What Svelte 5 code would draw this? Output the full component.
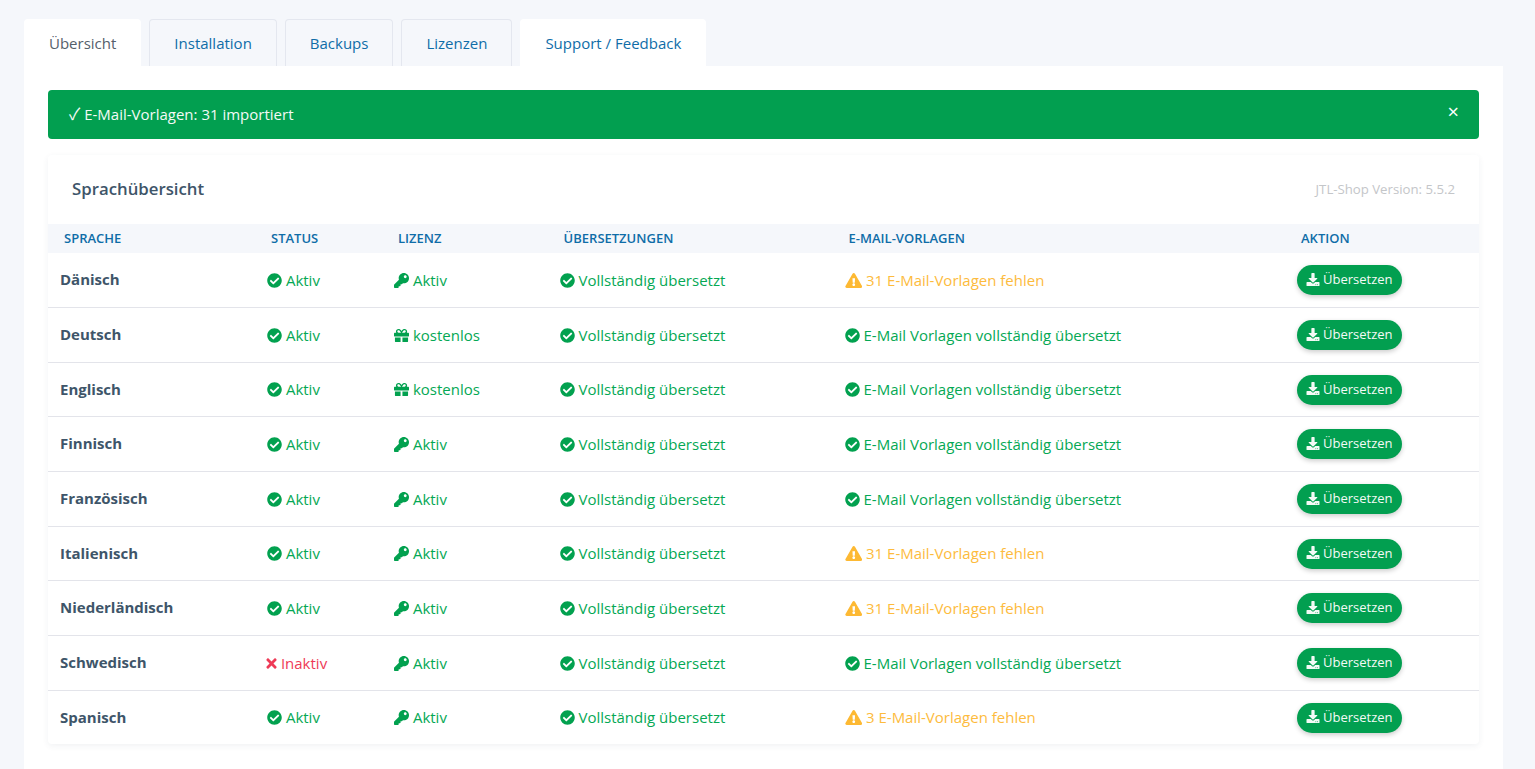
<script>
  const icons = {
    check: { vb: '0 0 512 512', d: 'M504 256c0 136.967-111.033 248-248 248S8 392.967 8 256 119.033 8 256 8s248 111.033 248 248zM227.314 387.314l184-184c6.248-6.248 6.248-16.379 0-22.627l-22.627-22.627c-6.248-6.249-16.379-6.249-22.628 0L216 308.118l-70.059-70.059c-6.248-6.248-16.379-6.248-22.628 0l-22.627 22.627c-6.248 6.248-6.248 16.379 0 22.627l104 104c6.249 6.249 16.379 6.249 22.628.001z' },
    key: { vb: '0 0 512 512', d: 'M512 176.001C512 273.203 433.202 352 336 352c-11.22 0-22.19-1.062-32.827-3.069l-24.012 27.014A23.999 23.999 0 0 1 261.223 384H224v40c0 13.255-10.745 24-24 24h-40v40c0 13.255-10.745 24-24 24H24c-13.255 0-24-10.745-24-24v-78.059c0-6.365 2.529-12.47 7.029-16.971l161.802-161.802C163.108 213.814 160 195.271 160 176 160 78.798 238.797.001 335.999 0 433.488-.001 512 78.511 512 176.001zM336 128c0 26.51 21.49 48 48 48s48-21.49 48-48-21.49-48-48-48-48 21.49-48 48z' },
    gift: { vb: '0 0 512 512', d: 'M32 448c0 17.7 14.3 32 32 32h160V320H32v128zm256 32h160c17.7 0 32-14.3 32-32V320H288v160zm192-320h-42.1c6.2-12.1 10.1-25.5 10.1-40 0-48.5-39.5-88-88-88-41.6 0-68.5 21.3-103 68.3-34.5-47-61.4-68.3-103-68.3-48.5 0-88 39.5-88 88 0 14.5 3.8 27.9 10.1 40H32c-17.7 0-32 14.3-32 32v80c0 8.8 7.2 16 16 16h480c8.8 0 16-7.2 16-16v-80c0-17.7-14.3-32-32-32zm-326.1 0c-22.1 0-40-17.9-40-40s17.9-40 40-40c19.9 0 34.6 3.3 86.1 80h-86.1zm206.1 0h-86.1c51.4-76.5 65.7-80 86.1-80 22.1 0 40 17.9 40 40s-17.9 40-40 40z' },
    warn: { vb: '0 0 576 512', d: 'M569.517 440.013C587.975 472.007 564.806 512 527.94 512H48.054c-36.937 0-59.999-40.055-41.577-71.987L246.423 24.035c18.467-32.009 64.72-31.951 83.154 0l239.94 416.978zM288 354c-25.405 0-46 20.595-46 46s20.595 46 46 46 46-20.595 46-46-20.595-46-46-46zm-43.673-165.346l7.418 136c.347 6.364 5.609 11.346 11.982 11.346h48.546c6.373 0 11.635-4.982 11.982-11.346l7.418-136c.375-6.874-5.098-12.654-11.982-12.654h-63.383c-6.884 0-12.356 5.78-11.981 12.654z' },
    times: { vb: '0 0 352 512', d: 'M242.72 256l100.07-100.07c12.28-12.28 12.28-32.19 0-44.48l-22.24-22.24c-12.28-12.28-32.19-12.28-44.48 0L176 189.28 75.93 89.21c-12.28-12.28-32.19-12.28-44.48 0L9.21 111.45c-12.28 12.28-12.28 32.19 0 44.48L109.28 256 9.21 356.07c-12.28 12.28-12.28 32.19 0 44.48l22.24 22.24c12.28 12.28 32.2 12.28 44.48 0L176 322.72l100.07 100.07c12.28 12.28 32.2 12.28 44.48 0l22.24-22.24c12.28-12.28 12.28-32.19 0-44.48L242.72 256z' },
    download: { vb: '0 0 512 512', d: 'M216 0h80c13.3 0 24 10.7 24 24v168h87.7c17.8 0 26.7 21.5 14.1 34.1L269.7 378.3c-7.5 7.5-19.8 7.5-27.3 0L90.1 226.1c-12.6-12.6-3.7-34.1 14.1-34.1H192V24c0-13.3 10.7-24 24-24zm296 376v112c0 13.3-10.7 24-24 24H24c-13.3 0-24-10.7-24-24V376c0-13.3 10.7-24 24-24h146.7l49 49c20.1 20.1 52.5 20.1 72.6 0l49-49H488c13.3 0 24 10.7 24 24zm-124 88c0-11-9-20-20-20s-20 9-20 20 9 20 20 20 20-9 20-20zm64 0c0-11-9-20-20-20s-20 9-20 20 9 20 20 20 20-9 20-20z' }
  };

  const tabs = [
    { label: 'Übersicht', cls: 'active' },
    { label: 'Installation', cls: '' },
    { label: 'Backups', cls: '' },
    { label: 'Lizenzen', cls: '' },
    { label: 'Support / Feedback', cls: 'plain' }
  ];

  const ok = 'E-Mail Vorlagen vollständig übersetzt';
  const rows = [
    ['Dänisch', true, 'key', '31 E-Mail-Vorlagen fehlen'],
    ['Deutsch', true, 'gift', ok],
    ['Englisch', true, 'gift', ok],
    ['Finnisch', true, 'key', ok],
    ['Französisch', true, 'key', ok],
    ['Italienisch', true, 'key', '31 E-Mail-Vorlagen fehlen'],
    ['Niederländisch', true, 'key', '31 E-Mail-Vorlagen fehlen'],
    ['Schwedisch', false, 'key', ok],
    ['Spanisch', true, 'key', '3 E-Mail-Vorlagen fehlen']
  ];
  const heads = ['Sprache', 'Status', 'Lizenz', 'Übersetzungen', 'E-Mail-Vorlagen', 'Aktion'];
</script>

{#snippet icon(name)}
  <svg class="icon {name}" viewBox={icons[name].vb} aria-hidden="true"><path fill="currentColor" d={icons[name].d} /></svg>
{/snippet}

<div class="page">
  <nav class="tabs">
    {#each tabs as t}
      <span class="tab {t.cls}">{t.label}</span>
    {/each}
  </nav>
  <main class="panel">
    <div class="alert">
      <span><span class="tick">✓</span> E-Mail-Vorlagen: 31 importiert</span>
      <span class="close">×</span>
    </div>
    <section class="card">
      <header class="card-head">
        <h2>Sprachübersicht</h2>
        <span class="version">JTL-Shop Version: 5.5.2</span>
      </header>
      <table>
        <colgroup>
          <col class="c1" /><col class="c2" /><col class="c3" /><col class="c4" /><col class="c5" /><col class="c6" />
        </colgroup>
        <thead>
          <tr>
            {#each heads as h}<th>{h}</th>{/each}
          </tr>
        </thead>
        <tbody>
          {#each rows as r}
            <tr>
              <td class="name">{r[0]}</td>
              <td>
                {#if r[1]}
                  <span class="green">{@render icon('check')} Aktiv</span>
                {:else}
                  <span class="red">{@render icon('times')} Inaktiv</span>
                {/if}
              </td>
              <td><span class="green">{@render icon(r[2])} {r[2] === 'key' ? 'Aktiv' : 'kostenlos'}</span></td>
              <td><span class="green">{@render icon('check')} Vollständig übersetzt</span></td>
              <td>
                {#if r[3] === ok}
                  <span class="green">{@render icon('check')} {r[3]}</span>
                {:else}
                  <span class="amber">{@render icon('warn')} {r[3]}</span>
                {/if}
              </td>
              <td><button type="button">{@render icon('download')} Übersetzen</button></td>
            </tr>
          {/each}
        </tbody>
      </table>
    </section>
  </main>
</div>

<style>
  :global(body) {
    margin: 0;
    background: #f5f7fb;
    font-family: "Open Sans", sans-serif;
    font-size: 15px;
    color: #3e5569;
  }
  .page {
    padding: 19px 32px 0 24px;
    height: 750px;
    overflow: hidden;
  }
  .tabs {
    display: flex;
    gap: 8px;
    height: 47px;
  }
  .tab {
    box-sizing: border-box;
    display: flex;
    align-items: center;
    padding: 0 24px;
    font-size: 15px;
    color: #0f6da8;
    background: #f5f7fb;
    border: 1px solid #e4e7ef;
    border-bottom: 0;
    border-radius: 4px 4px 0 0;
  }
  .tab.active {
    color: #55606b;
    background: #fff;
    border-color: #fff;
  }
  .tab.plain {
    background: #fff;
    border-color: #fff;
  }
  .panel {
    background: #fff;
    padding: 24px;
    height: 100%;
  }
  .alert {
    display: flex;
    justify-content: space-between;
    box-sizing: border-box;
    height: 49px;
    align-items: center;
    padding: 0 20px 1px 21px;
    background: #029f50;
    color: #f4faf6;
    border-radius: 4px;
  }
  .tick {
    font-family: "Noto Sans CJK SC", sans-serif;
    font-size: 16.5px;
    line-height: 1;
  }
  .close {
    font-size: 20px;
    line-height: 1;
    margin-top: -5px;
    color: #fff;
  }
  .card {
    margin-top: 16px;
    background: #fff;
    box-shadow: 0 2px 6px rgba(60, 70, 100, 0.07);
    border-radius: 4px;
  }
  .card-head {
    height: 69px;
    box-sizing: border-box;
    display: flex;
    align-items: center;
    justify-content: space-between;
    padding: 0 24px 1px;
  }
  h2 {
    margin: 0 0 2px;
    font-size: 16.8px;
    font-weight: 600;
    color: #3e5569;
  }
  .version {
    font-size: 13.2px;
    color: #c4c6c9;
  }
  table {
    width: 100%;
    table-layout: fixed;
    border-collapse: separate;
    border-spacing: 0;
  }
  .c1 { width: 207px; }
  .c2 { width: 127px; }
  .c3 { width: 165.6px; }
  .c4 { width: 285px; }
  .c5 { width: 452.4px; }
  th {
    background: #f5f7fb;
    color: #0f6da8;
    font-size: 13px;
    font-weight: 600;
    text-transform: uppercase;
    text-align: left;
    height: 29.33px;
    padding: 0 16px 1px;
    box-sizing: border-box;
  }
  td {
    box-sizing: border-box;
    height: 54.67px;
    padding: 0 12px;
    border-bottom: 1px solid #e3e4ea;
    white-space: nowrap;
  }
  tbody tr:last-child td {
    border-bottom: 0;
    height: 53.67px;
  }
  .name {
    font-weight: 700;
    color: #3e5569;
    padding-bottom: 1.4px;
  }
  .green { color: #05a854; }
  .red { color: #ee3a56; }
  .amber { color: #fdbb3d; }
  .green, .red, .amber {
    display: inline-block;
  }
  .icon {
    height: 15px;
    width: 15px;
    vertical-align: -2px;
  }
  .icon.times { width: 11px; margin-left: -1px; }
  .icon.warn { width: 17.5px; }
  .icon.check, .icon.key, .icon.gift { color: #02a14f; }
  .icon.warn { color: #fdb933; }
  button {
    display: inline-flex;
    align-items: center;
    gap: 3px;
    box-sizing: border-box;
    height: 30px;
    margin-top: 0.6px;
    padding: 0 9px 2px;
    border: 0;
    border-radius: 15px;
    background: #029f50;
    color: #f4faf6;
    font: 13px "Open Sans", sans-serif;
    box-shadow: 0 2px 5px rgba(0, 0, 0, 0.2);
    white-space: nowrap;
  }
  button .icon {
    width: 14px;
    height: 13px;
    color: inherit;
  }
</style>
